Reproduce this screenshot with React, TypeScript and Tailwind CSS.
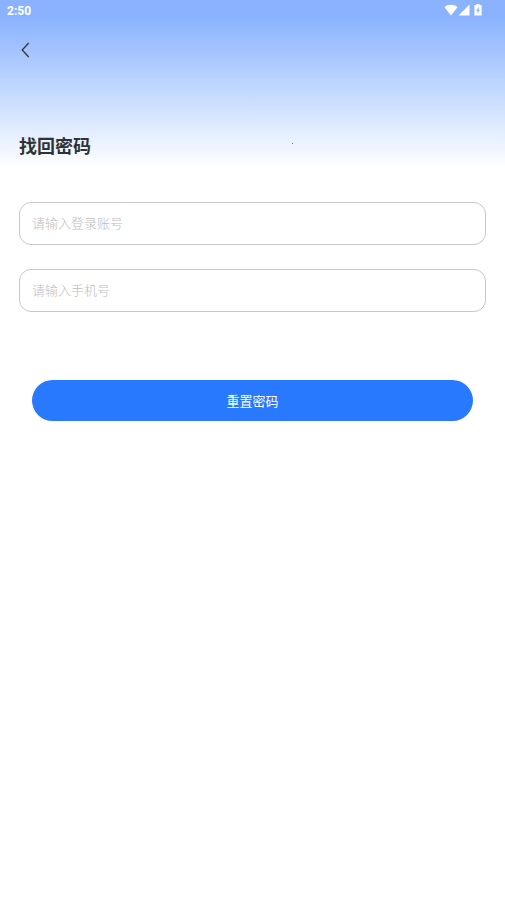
import React, { useState } from 'react';

interface TextFieldProps {
  id: string;
  label: string;
  type?: string;
  value: string;
  onChange: (value: string) => void;
}

const StatusBar: React.FC = () => (
  <div className="flex h-5 items-center justify-between pl-[7px] pr-[23px] text-white">
    <span className="pt-px font-['Roboto',sans-serif] text-xs font-bold">2:50</span>
    <div className="flex items-center">
      <svg className="h-3 w-[14px]" viewBox="0 0 14 12" fill="currentColor" aria-hidden="true">
        <path d="M7 11.5 0.5 3.2C4 0 10 0 13.5 3.2Z" />
      </svg>
      <svg className="h-3 w-3" viewBox="0 0 12 12" fill="currentColor" aria-hidden="true">
        <path d="M11.5 0.5v11h-11Z" />
      </svg>
      <svg className="ml-1 h-3 w-2" viewBox="0 0 8 12" fill="currentColor" aria-hidden="true">
        <path fillRule="evenodd" d="M2.3 0h3.4v1H7.6v10.6H0.4V1h1.9ZM4.6 2.8 2.2 6.8h1.4v3l2.3-4H4.6Z" />
      </svg>
    </div>
  </div>
);

const TextField: React.FC<TextFieldProps> = ({ id, label, type = 'text', value, onChange }) => (
  <input
    id={id}
    type={type}
    value={value}
    aria-label={label}
    placeholder={label}
    onChange={(e) => onChange(e.target.value)}
    className="block h-[43px] w-full rounded-xl border border-[#c8c8c8] bg-white px-3 pb-0.5 text-[13px] font-light text-gray-800 outline-none placeholder:text-[#bdbdbd]"
  />
);

export default function App() {
  const [account, setAccount] = useState('');
  const [phone, setPhone] = useState('');

  return (
    <div className="min-h-screen bg-white bg-linear-to-b from-[#8ab2ff] from-10% to-white bg-size-[100%_168px] bg-no-repeat font-['Noto_Sans_CJK_SC',sans-serif]">
      <StatusBar />
      <header className="flex h-15 items-center px-[19px]">
        <button type="button" aria-label="返回" className="text-[#333333]">
          <svg className="h-4 w-3" viewBox="0 0 12 16" fill="none" stroke="currentColor" strokeWidth="1.3" aria-hidden="true">
            <path d="M9.7 1 3.2 8l6.5 7" />
          </svg>
        </button>
      </header>

      <form className="px-[19px] pt-[51px]" onSubmit={(e) => e.preventDefault()}>
        <div className="relative">
          <h1 className="text-lg leading-7 font-bold text-[#2f3338]">找回密码</h1>
          <span className="absolute top-3 left-[58.5%] size-px bg-[#1a9aa0]" />
        </div>
        <div className="mt-[43px] space-y-6">
          <TextField id="account" label="请输入登录账号" value={account} onChange={setAccount} />
          <TextField id="phone" label="请输入手机号" type="tel" value={phone} onChange={setPhone} />
        </div>
        <div className="mt-[68px] px-[13px]">
          <button type="submit" className="block h-[41px] w-full rounded-full bg-[#2979ff] text-[13px] text-white">
            重置密码
          </button>
        </div>
      </form>
    </div>
  );
}
